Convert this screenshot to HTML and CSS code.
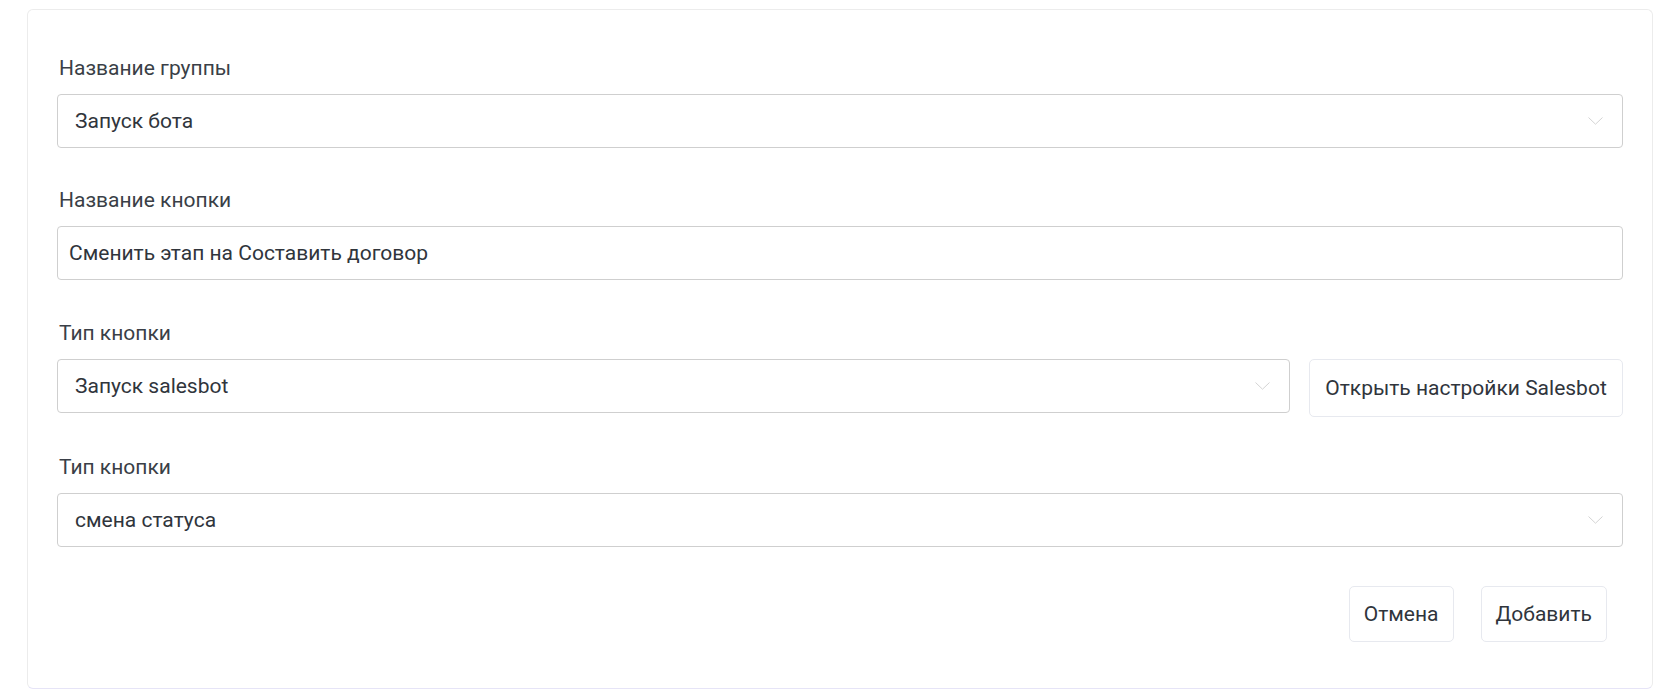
FILE: index.html
```html
<!DOCTYPE html>
<html lang="ru">
<head>
<meta charset="utf-8">
<title>Кнопка</title>
<link rel="stylesheet" href="styles.css">
</head>
<body>
<div class="page">
  <form class="card">
    <div class="group">
      <div class="label">Название группы</div>
      <div class="select">
        <span class="select-text">Запуск бота</span>
        <svg class="chevron" width="15" height="8" viewBox="0 0 15 8"><path d="M0.5 0.5 L7.5 7.2 L14.5 0.5" fill="none" stroke="#d4d4d4" stroke-width="1"/></svg>
      </div>
    </div>
    <div class="group group-second">
      <div class="label">Название кнопки</div>
      <div class="input">Сменить этап на Составить договор</div>
    </div>
    <div class="group group-row">
      <div class="label">Тип кнопки</div>
      <div class="row">
        <div class="select select-grow">
          <span class="select-text">Запуск salesbot</span>
          <svg class="chevron" width="15" height="8" viewBox="0 0 15 8"><path d="M0.5 0.5 L7.5 7.2 L14.5 0.5" fill="none" stroke="#d4d4d4" stroke-width="1"/></svg>
        </div>
        <button type="button" class="btn btn-wide">Открыть настройки Salesbot</button>
      </div>
    </div>
    <div class="group group-last">
      <div class="label">Тип кнопки</div>
      <div class="select">
        <span class="select-text">смена статуса</span>
        <svg class="chevron" width="15" height="8" viewBox="0 0 15 8"><path d="M0.5 0.5 L7.5 7.2 L14.5 0.5" fill="none" stroke="#d4d4d4" stroke-width="1"/></svg>
      </div>
    </div>
    <div class="actions">
      <button type="button" class="btn">Отмена</button>
      <button type="button" class="btn">Добавить</button>
    </div>
  </form>
</div>
</body>
</html>
```
FILE: styles.css
```css
html, body {
  margin: 0;
  padding: 0;
  background: #ffffff;
}

body {
  font-family: Roboto, "Noto Sans", "DejaVu Sans", sans-serif;
  color: #353a42;
}

.page {
  padding: 9px 27px 10px 27px;
}

.card {
  display: block;
  border: 1px solid #ececec;
  border-bottom-color: #e6e4f7;
  border-radius: 6px;
  padding: 46px 29px 46px 29px;
  background: #fff;
}

.group {
  margin-bottom: 40px;
}

.group-second {
  margin-bottom: 41px;
}

.group-row {
  margin-bottom: 38px;
}

.group-last {
  margin-bottom: 39px;
}

.label {
  font-size: 21px;
  line-height: 24px;
  height: 24px;
  margin: 0 0 14px 2px;
  color: #3a3f47;
}

.select,
.input {
  box-sizing: border-box;
  height: 54px;
  border: 1px solid #cfcfcf;
  border-radius: 4px;
  background: #fff;
  font-size: 21px;
  color: #30353c;
  display: flex;
  align-items: center;
}

.select {
  padding: 0 19px 0 17px;
  justify-content: space-between;
}

.input {
  padding: 0 11px;
}

.chevron {
  display: block;
  flex: none;
}

.row {
  display: flex;
  align-items: flex-start;
  gap: 19px;
}

.select-grow {
  flex: 1;
}

.btn {
  box-sizing: border-box;
  height: 57px;
  padding: 0 14px;
  border: 1px solid #e7e9ef;
  border-radius: 5px;
  background: #fff;
  font-family: Roboto, "Noto Sans", "DejaVu Sans", sans-serif;
  font-size: 21px;
  color: #30353c;
  cursor: pointer;
}

.btn-wide {
  width: 314px;
  height: 58px;
  padding: 0;
}

.actions {
  display: flex;
  justify-content: flex-end;
  gap: 27px;
  padding-right: 16px;
}

.actions .btn {
  height: 56px;
}
```
